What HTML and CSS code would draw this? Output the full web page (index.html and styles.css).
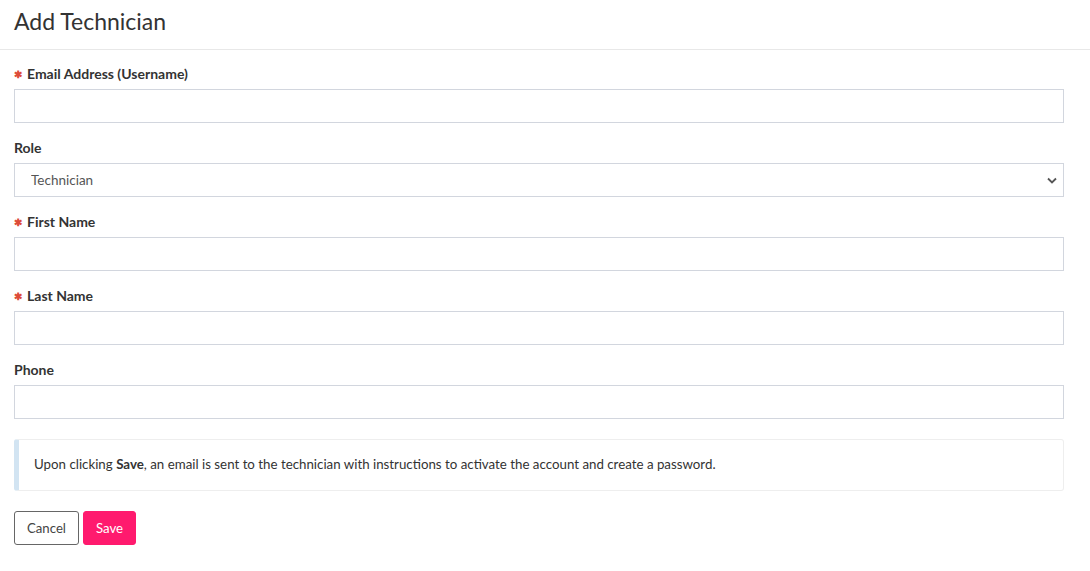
FILE: index.html
```html
<!DOCTYPE html>
<html lang="en">
<head>
    <meta charset="UTF-8">
    <title>Add Technician</title>
    <link rel="stylesheet" href="styles.css">
</head>
<body>

    <div class="page-header">
        <h1>Add Technician</h1>
    </div>

    <form class="tech-form">
        <div class="form-group">
            <label class="required" for="email">Email Address (Username)</label>
            <input type="text" id="email" class="form-control">
        </div>

        <div class="form-group">
            <label for="role">Role</label>
            <div class="select-wrap">
                <select id="role" class="form-control">
                    <option>Technician</option>
                </select>
                <svg class="caret" width="10" height="7" viewBox="0 0 10 7"><path d="M1 1.5 L5 5.5 L9 1.5" fill="none" stroke="#555" stroke-width="1.8"/></svg>
            </div>
        </div>

        <div class="form-group">
            <label class="required" for="first">First Name</label>
            <input type="text" id="first" class="form-control">
        </div>

        <div class="form-group">
            <label class="required" for="last">Last Name</label>
            <input type="text" id="last" class="form-control">
        </div>

        <div class="form-group">
            <label for="phone">Phone</label>
            <input type="text" id="phone" class="form-control">
        </div>

        <div class="callout">
            Upon clicking <b>Save</b>, an email is sent to the technician with instructions to activate the account and create a password.
        </div>

        <div class="actions">
            <button type="button" class="btn btn-cancel">Cancel</button>
            <button type="button" class="btn btn-save">Save</button>
        </div>
    </form>

</body>
</html>
```

FILE: styles.css
```css
body {
    margin: 0;
    background: #fff;
    color: #333;
    font-family: Lato, "Liberation Sans", sans-serif;
    font-size: 14px;
}

.page-header {
    height: 49px;
    border-bottom: 1px solid #e8e8e8;
    padding: 0 14px;
}

.page-header h1 {
    margin: 0;
    padding-top: 8px;
    font-size: 23px;
    font-weight: 400;
    line-height: 26px;
    color: #333;
}

.tech-form {
    padding: 14px 14px 0;
    width: 1050px;
}

.form-group {
    margin-bottom: 15px;
}

.form-group label {
    display: block;
    height: 20px;
    font-size: 14px;
    font-weight: 700;
    line-height: 20px;
    margin-bottom: 5px;
    color: #333;
}

.form-group label.required::before {
    content: "\2731";
    display: inline-block;
    width: 13px;
    line-height: 1;
    vertical-align: 1px;
    color: #dd4b39;
    font-size: 10px;
}

.form-control {
    display: block;
    box-sizing: border-box;
    width: 100%;
    height: 34px;
    border: 1px solid #d2d6de;
    border-radius: 0;
    background: #fff;
    padding: 6px 12px;
    font-family: inherit;
    font-size: 13.5px;
    color: #555;
    outline: none;
}

.select-wrap {
    position: relative;
}

.select-wrap select {
    -webkit-appearance: none;
    appearance: none;
    padding-left: 16px;
}

.select-wrap .caret {
    position: absolute;
    right: 7px;
    top: 14px;
}

.callout {
    margin-top: 20px;
    border: 1px solid #eee;
    border-left: 5px solid #d2e4f2;
    border-radius: 3px;
    padding: 16px 15px 17px;
    font-size: 13.3px;
    line-height: 17px;
    color: #333;
}

.actions {
    display: flex;
    gap: 4px;
    margin-top: 20px;
}

.btn {
    height: 34px;
    padding: 0 12px;
    border-radius: 3px;
    font-family: inherit;
    font-size: 13.2px;
    cursor: pointer;
}

.btn-cancel {
    background: #fff;
    border: 1px solid #666;
    color: #444;
}

.btn-save {
    background: #ff1a6e;
    border: 1px solid #ff1a6e;
    color: #fff;
}
```
